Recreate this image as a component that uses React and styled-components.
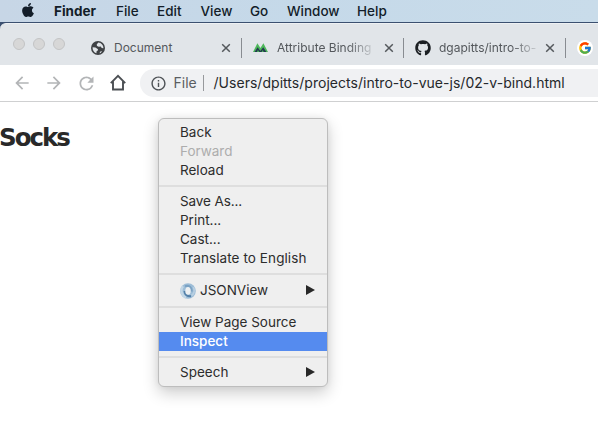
import React from "react";
import styled, { createGlobalStyle, css } from "styled-components";
import { FaApple, FaGithub } from "react-icons/fa";
import { FcGoogle } from "react-icons/fc";
import { MdArrowBack, MdArrowForward, MdRefresh, MdInfoOutline } from "react-icons/md";

const GlobalStyle = createGlobalStyle`
  * { box-sizing: border-box; }
  body { margin: 0; background: #fff; overflow: hidden; }
`;

const Screen = styled.div`
  position: relative;
  width: 598px;
  height: 446px;
  display: flex;
  flex-direction: column;
  overflow: hidden;
  background: #fff;
  font-family: Inter, "Liberation Sans", sans-serif;
  white-space: nowrap;
`;

const MenuBar = styled.nav`
  height: 23px;
  flex: none;
  display: flex;
  align-items: center;
  padding: 0 0 1px 20px;
  background: linear-gradient(90deg, #c7d6e6, #c5d9e9 50%, #c9dcea);
  border-bottom: 1px solid #3b5070;
  color: #131d29;
  font-size: 13.5px;
`;

const AppleSlot = styled.span`
  width: 34px;
  display: flex;
  padding-bottom: 2px;
`;

const MenuTitle = styled.span`
  flex: none;
  width: ${(p) => p.$width}px;
  font-weight: ${(p) => (p.$bold ? 700 : 450)};
`;

const TabStripBackdrop = styled.div`
  height: 42px;
  flex: none;
  background: #3b5070;
`;

const TabStrip = styled.div`
  height: 42px;
  display: flex;
  align-items: center;
  background: #e1e5e9;
  border-top: 1px solid #eef1f3;
  border-radius: 6px 0 0 0;
  padding: 6px 0 0 13px;
`;

const TrafficLights = styled.div`
  display: flex;
  gap: 8px;
  width: 78px;
  padding-bottom: 8px;
`;

const Light = styled.i`
  width: 12px;
  height: 12px;
  border-radius: 50%;
  background: #d7d7d7;
  border: 1px solid #c3c4c5;
`;

const Tab = styled.div`
  flex: none;
  width: ${(p) => p.$width}px;
  height: 20px;
  display: flex;
  align-items: center;
  border-right: ${(p) => (p.$last ? "none" : "1px solid #888c91")};
  color: #54585c;
`;

const TabIcon = styled.span`
  flex: none;
  display: flex;
  width: ${(p) => p.$width}px;
  padding-left: ${(p) => p.$inset || 0}px;
  color: ${(p) => p.$color || "#3d4043"};
`;

const TabTitle = styled.span`
  flex: none;
  width: ${(p) => p.$width}px;
  font-size: 12px;
  line-height: 18px;
  padding-top: 1px;
  ${(p) =>
    p.$fade &&
    css`
      mask-image: linear-gradient(90deg, #000 calc(100% - 26px), rgba(0, 0, 0, 0.15));
    `}
`;

const CloseSlot = styled.span`
  display: flex;
  margin-left: ${(p) => p.$gap}px;
  color: #54585c;
`;

const GoogleBadge = styled.span`
  width: 16px;
  height: 16px;
  border-radius: 50%;
  background: #fff;
  display: flex;
  align-items: center;
  justify-content: center;
`;

const Toolbar = styled.div`
  height: 37px;
  flex: none;
  display: flex;
  align-items: center;
  background: #fff;
  border-bottom: 1px solid #cfd0d1;
  padding-left: 12px;
`;

const NavButton = styled.span`
  flex: none;
  width: 32px;
  display: flex;
  padding-left: ${(p) => (p.$active ? 1 : 0)}px;
  color: ${(p) => (p.$active ? "#4b4f53" : "#b3b5b7")};
`;

const AddressBar = styled.div`
  flex: none;
  width: 480px;
  height: 28px;
  border-radius: 14px 0 0 14px;
  background: #f0f1f3;
  display: flex;
  align-items: center;
  padding-left: 9.5px;
  color: #25282b;
`;

const Scheme = styled.span`
  width: 29px;
  margin-left: 7px;
  padding-bottom: 2px;
  color: #5a5e62;
  font-size: 14px;
`;

const Divider = styled.i`
  width: 1px;
  height: 16px;
  background: #97999c;
`;

const Url = styled.span`
  margin-left: 10px;
  padding-bottom: 2px;
  font-size: 14px;
  letter-spacing: 0.03px;
`;

const Page = styled.main`
  flex: 1;
  padding-top: 21px;
`;

const Heading = styled.h1`
  margin: 0;
  font-family: "DejaVu Sans", sans-serif;
  font-weight: 700;
  font-size: 24.5px;
  line-height: 30px;
  letter-spacing: -2px;
  text-indent: -1px;
  color: #292929;
`;

const ContextMenu = styled.div`
  position: absolute;
  left: 158px;
  top: 118px;
  width: 170px;
  height: 269px;
  padding: 4px 0;
  border: 1px solid #bdbdbd;
  border-radius: 6px;
  background: #efefef;
  box-shadow: 0 6px 16px rgba(0, 0, 0, 0.2), 0 0 6px rgba(0, 0, 0, 0.06);
  color: #2c2c2c;
  font-size: 13.5px;
`;

const MenuItem = styled.div`
  height: ${(p) => p.$height || 19}px;
  display: flex;
  align-items: center;
  padding: 0 12px 2px 21px;
  letter-spacing: ${(p) => p.$track || 0}px;
  ${(p) => p.$disabled && css`color: #adadad;`}
  ${(p) =>
    p.$selected &&
    css`
      background: #558bef;
      color: #fff;
      font-weight: 500;
    `}
`;

const Separator = styled.div`
  height: 12px;
  padding-top: 5px;
  &::before {
    content: "";
    display: block;
    height: 2px;
    background: #dedede;
  }
`;

const SubmenuArrow = styled.i`
  margin-left: auto;
  border-left: 9px solid #282828;
  border-top: 5px solid transparent;
  border-bottom: 5px solid transparent;
`;

const JsonIconSlot = styled.span`
  display: flex;
  width: 20px;
  padding-top: 2px;
`;

const CloseIcon = () => (
  <svg width="10" height="10" viewBox="0 0 10 10">
    <path d="M1.2 1.2l7.6 7.6M8.8 1.2L1.2 8.8" stroke="currentColor" strokeWidth="1.5" />
  </svg>
);

const GlobeIcon = () => (
  <svg width="14" height="14" viewBox="0 0 14 14">
    <circle cx="7" cy="7" r="7" fill="#3f4245" />
    <path d="M7.3 1.6L5.7 3.4 6 5 7.8 5.8 9.8 5.6 10.7 7 12.4 7.3C12.7 4.7 10.3 1.8 7.3 1.6z" fill="#e1e5e9" />
    <path d="M1.6 6.2L4.5 6.4 7 8.2 6.8 9.6 5.6 10.2 5.4 12.2C3 11.5 1.3 9 1.6 6.2z" fill="#e1e5e9" />
    <path d="M8.7 12.2L9 10.7 11 9.9C10.5 11 9.8 11.8 8.7 12.2z" fill="#e1e5e9" />
  </svg>
);

const HomeIcon = () => (
  <svg width="18" height="18" viewBox="0 0 18 18">
    <path d="M1.8 9.1L9 1.9l7.2 7.2M4 7.5v8h10v-8" fill="none" stroke="currentColor" strokeWidth="1.9" />
  </svg>
);

const PeaksIcon = () => (
  <svg width="15" height="9" viewBox="0 0 15 9">
    <path d="M0 9L4.4 0.3 7.4 5 10.4 0.3 15 9z" fill="#4db75b" />
    <path d="M1.6 9L4.6 4.2 7.4 8 10.2 4.2 13.4 9h-2.8l-.7-2L8.5 9H6.4L4.9 7 4 9z" fill="#243a50" />
  </svg>
);

const JsonIcon = () => (
  <svg width="16" height="16" viewBox="0 0 16 16">
    <circle cx="8" cy="8" r="7.8" fill="#9dbdd7" />
    <path d="M3 3.2C0 7 1.5 12.5 6 14.6" fill="none" stroke="#c3d7e6" strokeWidth="2.4" />
    <path d="M4.6 8C4.8 11.5 7.5 13.6 11 13.2" fill="none" stroke="#527fa8" strokeWidth="2.2" />
    <path d="M5 3.2C9 2 12 4.5 11.8 8.5" fill="none" stroke="#7ba2c4" strokeWidth="2.2" />
    <path d="M13.4 4.2C15 7.5 14 11 11.5 12.6" fill="none" stroke="#b9d0e2" strokeWidth="1.8" />
    <ellipse cx="8" cy="7.9" rx="2.7" ry="3.8" fill="#edf0f2" />
  </svg>
);

export default function App() {
  return (
    <Screen>
      <GlobalStyle />
      <MenuBar>
        <AppleSlot><FaApple size={16} /></AppleSlot>
        <MenuTitle $width={62} $bold>Finder</MenuTitle>
        <MenuTitle $width={41}>File</MenuTitle>
        <MenuTitle $width={43.5}>Edit</MenuTitle>
        <MenuTitle $width={49.5}>View</MenuTitle>
        <MenuTitle $width={37}>Go</MenuTitle>
        <MenuTitle $width={70}>Window</MenuTitle>
        <MenuTitle $width={40}>Help</MenuTitle>
      </MenuBar>
      <TabStripBackdrop>
        <TabStrip>
          <TrafficLights><Light /><Light /><Light /></TrafficLights>
          <Tab $width={151}>
            <TabIcon $width={23}><GlobeIcon /></TabIcon>
            <TabTitle $width={97}>Document</TabTitle>
            <CloseSlot $gap={10}><CloseIcon /></CloseSlot>
          </Tab>
          <Tab $width={162}>
            <TabIcon $width={35} $inset={11}><PeaksIcon /></TabIcon>
            <TabTitle $width={96} $fade>Attribute Binding</TabTitle>
            <CloseSlot $gap={11}><CloseIcon /></CloseSlot>
          </Tab>
          <Tab $width={162}>
            <TabIcon $width={35} $inset={11} $color="#1b1f23"><FaGithub size={16} /></TabIcon>
            <TabTitle $width={98} $fade>dgapitts/intro-to-</TabTitle>
            <CloseSlot $gap={8}><CloseIcon /></CloseSlot>
          </Tab>
          <Tab $width={30} $last>
            <TabIcon $width={27} $inset={11}><GoogleBadge><FcGoogle size={14} /></GoogleBadge></TabIcon>
          </Tab>
        </TabStrip>
      </TabStripBackdrop>
      <Toolbar>
        <NavButton><MdArrowBack size={20} /></NavButton>
        <NavButton><MdArrowForward size={20} /></NavButton>
        <NavButton><MdRefresh size={21} /></NavButton>
        <NavButton $active><HomeIcon /></NavButton>
        <AddressBar>
          <MdInfoOutline size={17} color="#4e5256" />
          <Scheme>File</Scheme>
          <Divider />
          <Url>/Users/dpitts/projects/intro-to-vue-js/02-v-bind.html</Url>
        </AddressBar>
      </Toolbar>
      <Page><Heading>Socks</Heading></Page>
      <ContextMenu>
        <MenuItem>Back</MenuItem>
        <MenuItem $disabled>Forward</MenuItem>
        <MenuItem>Reload</MenuItem>
        <Separator />
        <MenuItem $track={-0.1}>Save As...</MenuItem>
        <MenuItem>Print...</MenuItem>
        <MenuItem>Cast...</MenuItem>
        <MenuItem $track={0.09}>Translate to English</MenuItem>
        <Separator />
        <MenuItem $height={21}><JsonIconSlot><JsonIcon /></JsonIconSlot>JSONView<SubmenuArrow /></MenuItem>
        <Separator />
        <MenuItem>View Page Source</MenuItem>
        <MenuItem $selected>Inspect</MenuItem>
        <Separator />
        <MenuItem>Speech<SubmenuArrow /></MenuItem>
      </ContextMenu>
    </Screen>
  );
}
